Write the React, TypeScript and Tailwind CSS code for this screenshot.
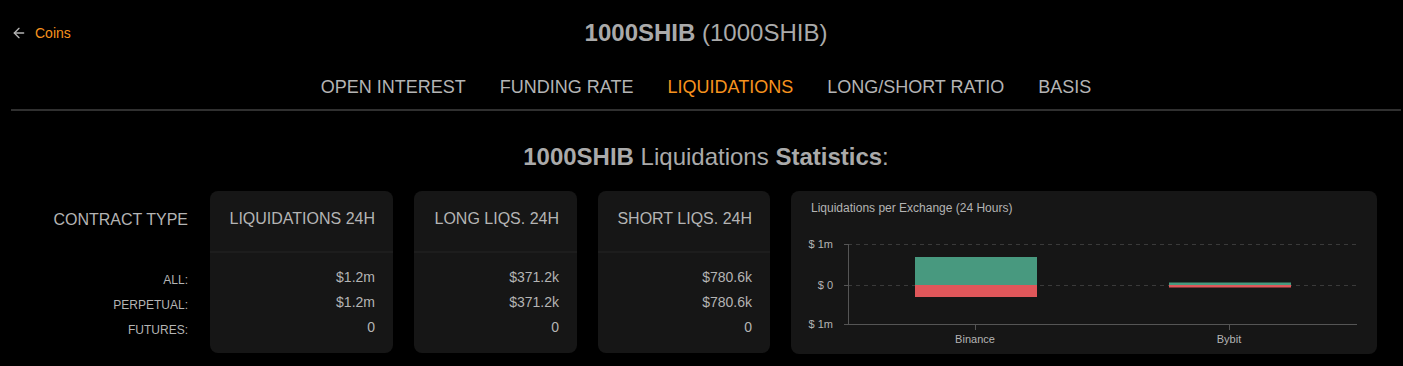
import { ArrowLeft } from 'lucide-react'

const tabs = ['OPEN INTEREST', 'FUNDING RATE', 'LIQUIDATIONS', 'LONG/SHORT RATIO', 'BASIS']

const rowLabels = ['ALL:', 'PERPETUAL:', 'FUTURES:']

const cards = [
  { title: 'LIQUIDATIONS 24H', width: 'w-[183px]', values: ['$1.2m', '$1.2m', '0'] },
  { title: 'LONG LIQS. 24H', width: 'w-[163px]', values: ['$371.2k', '$371.2k', '0'] },
  { title: 'SHORT LIQS. 24H', width: 'w-[172px]', values: ['$780.6k', '$780.6k', '0'] },
]

function StatCard({ title, width, values }: { title: string; width: string; values: string[] }) {
  return (
    <div className={`${width} h-[162px] bg-[#161616] rounded-lg flex flex-col`}>
      <div className="h-[62px] flex items-center justify-end pr-[18px] pb-[4px] text-[16px] text-[#b4b4b4] border-b-2 border-[#1d1d1d]">
        {title}
      </div>
      <div className="pt-[12px] flex flex-col">
        {values.map((v, i) => (
          <div key={i} className="h-[25px] flex items-center justify-end pr-[18px] text-[14px] text-[#b4b4b4]">
            {v}
          </div>
        ))}
      </div>
    </div>
  )
}

function ExchangeChart() {
  const font = '"Liberation Sans", Arial, sans-serif'
  return (
    <div className="w-[586px] h-[163px] bg-[#161616] rounded-lg flex flex-col">
      <div className="px-[20px] pt-[10px] text-[12px] leading-[14px] text-[#b4b4b4]">
        Liquidations per Exchange (24 Hours)
      </div>
      <svg width="586" height="139" viewBox="0 0 586 139">
        {/* grid */}
        <line x1="57" y1="29.5" x2="566" y2="29.5" stroke="#3a3a3a" strokeDasharray="4 4" />
        <line x1="57" y1="70.5" x2="566" y2="70.5" stroke="#3a3a3a" strokeDasharray="4 4" />
        {/* axes */}
        <line x1="57.5" y1="29" x2="57.5" y2="109" stroke="#555" />
        <line x1="57" y1="109.5" x2="566" y2="109.5" stroke="#555" />
        <line x1="53" y1="29.5" x2="57" y2="29.5" stroke="#555" />
        <line x1="53" y1="70.5" x2="57" y2="70.5" stroke="#555" />
        <line x1="53" y1="109.5" x2="57" y2="109.5" stroke="#555" />
        <line x1="184.5" y1="109" x2="184.5" y2="115" stroke="#555" />
        <line x1="438.5" y1="109" x2="438.5" y2="115" stroke="#555" />
        {/* bars */}
        <rect x="124" y="42" width="122" height="28" fill="#48997f" />
        <rect x="124" y="70" width="122" height="12" fill="#e0575a" />
        <rect x="378" y="67.5" width="122" height="2.5" fill="#48997f" />
        <rect x="378" y="70" width="122" height="2.5" fill="#e0575a" />
        {/* labels */}
        <g fontFamily={font} fontSize="11" fill="#b4b4b4">
          <text x="42" y="33" textAnchor="end">$ 1m</text>
          <text x="42" y="74" textAnchor="end">$ 0</text>
          <text x="42" y="113" textAnchor="end">$ 1m</text>
          <text x="184" y="128" textAnchor="middle">Binance</text>
          <text x="438" y="128" textAnchor="middle">Bybit</text>
        </g>
      </svg>
    </div>
  )
}

export default function App() {
  return (
    <div className="w-full h-[366px] bg-black pl-[11px] pr-[2px] font-['Liberation_Sans',Arial,sans-serif] text-[#b4b4b4]">
      {/* header */}
      <div className="h-[66px] grid grid-cols-[1fr_auto_1fr] items-center">
        <div className="flex items-center gap-[8px] text-[14px] text-[#f7931e]">
          <ArrowLeft size={16} strokeWidth={2} className="text-[#b4b4b4]" />
          <span>Coins</span>
        </div>
        <h1 className="text-[24px] text-[#aaaaaa]">
          <span className="font-bold">1000SHIB</span> (1000SHIB)
        </h1>
        <div />
      </div>

      {/* tabs */}
      <div className="h-[43px] flex items-center justify-center gap-[34px] text-[18px]">
        {tabs.map((t) => (
          <span key={t} className={t === 'LIQUIDATIONS' ? 'text-[#f7931e]' : 'text-[#b4b4b4]'}>
            {t}
          </span>
        ))}
      </div>
      <div className="h-[2px] bg-[#303030]" />

      <h2 className="mt-[32px] mb-[20px] text-center text-[24px] leading-[28px] text-[#aaaaaa]">
        <span className="font-bold">1000SHIB</span> Liquidations <span className="font-bold">Statistics</span>:
      </h2>

      {/* statistics */}
      <div className="flex items-start gap-[22px]">
        <div className="w-[177px] flex flex-col">
          <div className="h-[62px] flex items-center justify-end pb-[4px] text-[16px] text-[#b4b4b4]">
            CONTRACT TYPE
          </div>
          <div className="pt-[14px] flex flex-col">
            {rowLabels.map((l) => (
              <div key={l} className="h-[25px] flex items-center justify-end text-[12px] text-[#b4b4b4]">
                {l}
              </div>
            ))}
          </div>
        </div>
        <div className="flex gap-[21px]">
          {cards.map((c) => (
            <StatCard key={c.title} {...c} />
          ))}
          <ExchangeChart />
        </div>
      </div>
    </div>
  )
}
